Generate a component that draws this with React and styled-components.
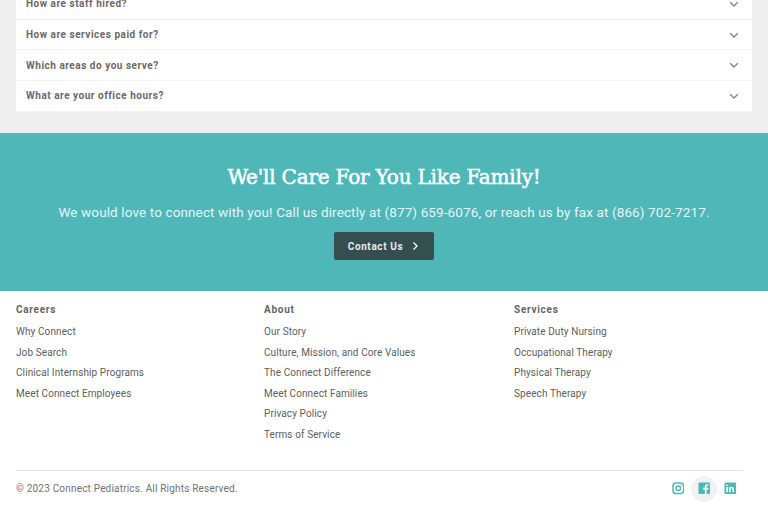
import { createGlobalStyle } from "styled-components";
import styled from "styled-components";

const GlobalStyle = createGlobalStyle`
  html, body {
    margin: 0;
    padding: 0;
    height: 512px;
    overflow: hidden;
    background: #fff;
    font-family: Roboto, "Liberation Sans", sans-serif;
  }
`;

const Page = styled.div`
  width: 768px;
  height: 512px;
  overflow: hidden;
`;

const FaqSection = styled.section`
  background: #eeeeee;
  padding: 0 16px;
  height: 133px;
  box-sizing: border-box;
  overflow: hidden;
`;

const FaqList = styled.div`
  margin-top: -11px;
  display: flex;
  flex-direction: column;
`;

const FaqRow = styled.div`
  height: 30.7px;
  box-sizing: border-box;
  border-bottom: 1px solid #f3f3f3;
  background: #fff;
  display: flex;
  align-items: center;
  justify-content: space-between;
  padding: 0 12px 0 10px;
`;

const Question = styled.span`
  font-size: 10px;
  font-weight: 700;
  letter-spacing: 0.52px;
  color: #6a6866;
`;

const Chevron = styled.svg`
  width: 12px;
  height: 12px;
  fill: none;
  stroke: #858585;
  stroke-width: 1.3;
`;

const Band = styled.section`
  height: 158px;
  background: #4fb7b8;
  display: flex;
  flex-direction: column;
  align-items: center;
  color: #fff;
`;

const BandTitle = styled.h2`
  margin: 31px 0 0;
  font-family: "DejaVu Serif", "Liberation Serif", serif;
  font-size: 20px;
  line-height: 27px;
  font-weight: 400;
  letter-spacing: -0.2px;
  -webkit-text-stroke: 0.5px #fff;
`;

const BandText = styled.p`
  margin: 12px 0 0;
  font-size: 13.5px;
  line-height: 18px;
  color: #e6f5f5;
  letter-spacing: 0.12px;
`;

const ContactButton = styled.a`
  margin-top: 11px;
  width: 100px;
  height: 28px;
  box-sizing: border-box;
  background: #354f50;
  border-radius: 2px;
  display: flex;
  align-items: center;
  justify-content: center;
  gap: 7px;
  font-size: 10px;
  font-weight: 700;
  letter-spacing: 0.62px;
  color: #e4ecec;
`;

const ButtonArrow = styled.svg`
  width: 10px;
  height: 10px;
  fill: none;
  stroke: #fff;
  stroke-width: 1.3;
`;

const Footer = styled.footer`
  padding: 0 25px 0 16px;
`;

const Columns = styled.div`
  display: grid;
  grid-template-columns: 248px 250px 1fr;
  height: 180px;
  padding-top: 12px;
  box-sizing: border-box;
  border-bottom: 1px solid #e6e6e6;
`;

const ColumnTitle = styled.div`
  font-size: 10px;
  font-weight: 700;
  letter-spacing: 0.72px;
  line-height: 14px;
  color: #666564;
  margin-bottom: 5px;
`;

const FooterLink = styled.a`
  display: block;
  font-size: 10px;
  line-height: 20.5px;
  letter-spacing: 0.1px;
  color: #5b6060;
`;

const BottomBar = styled.div`
  display: flex;
  align-items: center;
  justify-content: space-between;
  height: 35px;
`;

const Copyright = styled.span`
  font-size: 10px;
  letter-spacing: 0.19px;
  color: #727272;
`;

const Socials = styled.div`
  display: flex;
  align-items: center;
`;

const SocialLink = styled.a`
  width: 26px;
  height: 26px;
  border-radius: 50%;
  display: flex;
  align-items: center;
  justify-content: center;
  background: ${(p) => (p.$active ? "#f2f2f2" : "transparent")};
`;

const SocialSvg = styled.svg`
  width: 12.5px;
  height: 12.5px;
`;

const questions = [
  "How are staff hired?",
  "How are services paid for?",
  "Which areas do you serve?",
  "What are your office hours?",
];

const columns = [
  { title: "Careers", links: ["Why Connect", "Job Search", "Clinical Internship Programs", "Meet Connect Employees"] },
  {
    title: "About",
    links: [
      "Our Story",
      "Culture, Mission, and Core Values",
      "The Connect Difference",
      "Meet Connect Families",
      "Privacy Policy",
      "Terms of Service",
    ],
  },
  { title: "Services", links: ["Private Duty Nursing", "Occupational Therapy", "Physical Therapy", "Speech Therapy"] },
];

const App = () => {
  return (
    <Page>
      <GlobalStyle />
      <FaqSection>
        <FaqList>
          {questions.map((q) => (
            <FaqRow key={q}>
              <Question>{q}</Question>
              <Chevron viewBox="0 0 12 12">
                <path d="M2.2 4.2L6 8l3.800-3.800" />
              </Chevron>
            </FaqRow>
          ))}
        </FaqList>
      </FaqSection>
      <Band>
        <BandTitle>We'll Care For You Like Family!</BandTitle>
        <BandText>We would love to connect with you! Call us directly at (877) 659-6076, or reach us by fax at (866) 702-7217.</BandText>
        <ContactButton>
          Contact Us
          <ButtonArrow viewBox="0 0 10 10">
            <path d="M3.500 1.500L7 5 3.500 8.500" />
          </ButtonArrow>
        </ContactButton>
      </Band>
      <Footer>
        <Columns>
          {columns.map((col) => (
            <div key={col.title}>
              <ColumnTitle>{col.title}</ColumnTitle>
              {col.links.map((l) => (
                <FooterLink key={l}>{l}</FooterLink>
              ))}
            </div>
          ))}
        </Columns>
        <BottomBar>
          <Copyright>© 2023 Connect Pediatrics. All Rights Reserved.</Copyright>
          <Socials>
            <SocialLink>
              <SocialSvg viewBox="0 0 13 13" fill="none" stroke="#4fb7b8" strokeWidth="1.5">
                <rect x="1" y="1" width="11" height="11" rx="3" />
                <circle cx="6.500" cy="6.500" r="2.400" />
                <circle cx="9.600" cy="3.400" r="0.500" fill="#4fb7b8" strokeWidth="0.400" />
              </SocialSvg>
            </SocialLink>
            <SocialLink $active>
              <SocialSvg viewBox="0 0 13 13">
                <path
                  fill="#4fb7b8"
                  d="M1.500 0.500h10a1 1 0 0 1 1 1v10a1 1 0 0 1-1 1H9V8h1.600l.3-1.900H9V5c0-.6.2-1 1-1h1V2.400c-.3 0-.9-.1-1.500-.1C8 2.300 7 3.200 7 4.800v1.300H5.300V8H7v4.500H1.500a1 1 0 0 1-1-1v-10a1 1 0 0 1 1-1z"
                />
              </SocialSvg>
            </SocialLink>
            <SocialLink>
              <SocialSvg viewBox="0 0 13 13">
                <path
                  fill="#4fb7b8"
                  fillRule="evenodd"
                  d="M1.500 0.500h10a1 1 0 0 1 1 1v10a1 1 0 0 1-1 1h-10a1 1 0 0 1-1-1v-10a1 1 0 0 1 1-1zM2.300 5.200v5.500h1.700V5.200H2.300zM3.150 2.500a1 1 0 1 0 0 2 1 1 0 0 0 0-2zM5.200 5.200v5.500h1.700V7.800c0-.8.400-1.200 1-1.200s.9.400.9 1.200v2.900h1.700V7.400c0-1.500-.8-2.300-2-2.300-.8 0-1.300.4-1.600.9v-.8H5.200z"
                />
              </SocialSvg>
            </SocialLink>
          </Socials>
        </BottomBar>
      </Footer>
    </Page>
  );
};

export default App;
